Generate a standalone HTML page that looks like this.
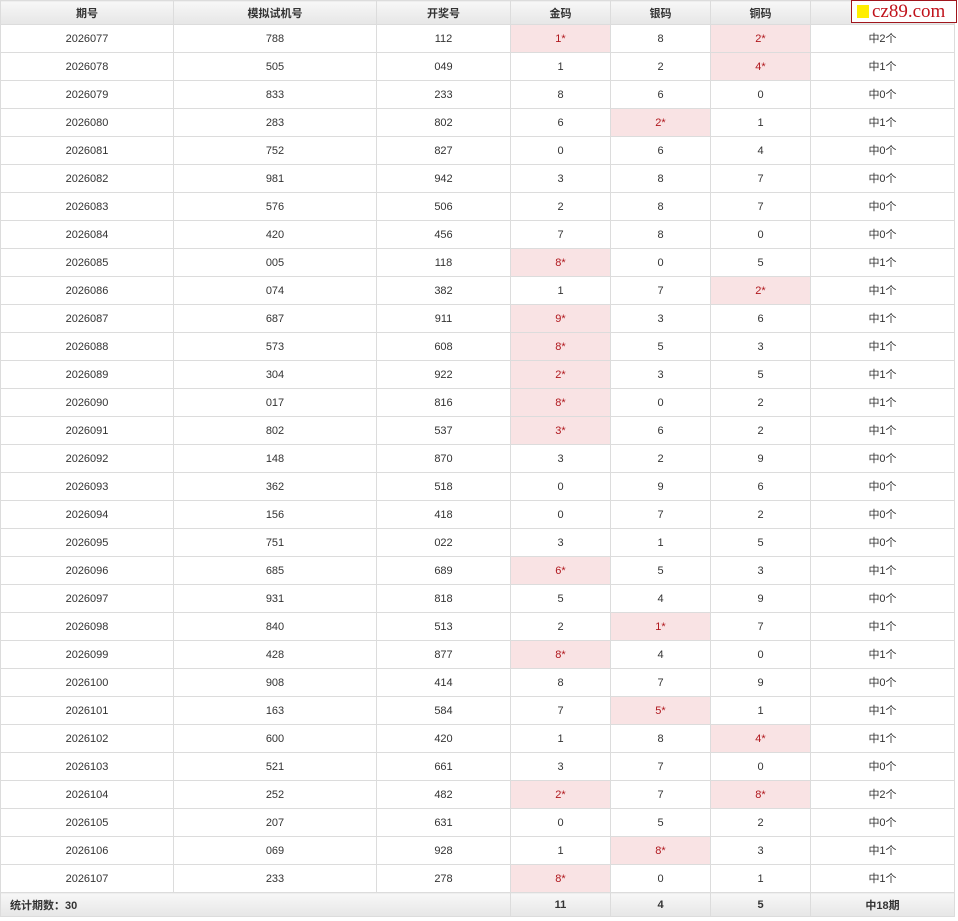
<!DOCTYPE html><html><head><meta charset="utf-8"><style>
body{margin:0;background:#fff;font-family:"Liberation Sans","Noto Sans CJK SC",sans-serif;font-size:11px;color:#333}
table{position:absolute;left:0;top:0;border-collapse:collapse;table-layout:fixed;width:954px}
td,th{border:1px solid #dcdcdc;text-align:center;padding:0;height:27px}
td span{position:relative;top:-1px}
th{height:23px;background:linear-gradient(#f7f7f7,#e6e6e6);font-weight:bold;color:#333}
td.h{background:#f9e3e4;color:#b0181e}
tr.f td{height:23px;background:linear-gradient(#f7f7f7,#e6e6e6);font-weight:bold}
.logo{position:absolute;left:851px;top:0;width:104px;height:21px;border:1px solid #a0151c;background:#fff;color:#c0121b;font-family:"Liberation Serif",serif;font-size:19px;line-height:21px}
.logo i{display:inline-block;width:12px;height:13px;background:#ffee00;margin:0 3px 0 5px;vertical-align:-1px}
</style></head><body>
<table>
<colgroup><col style="width:173px"><col style="width:203px"><col style="width:134px"><col style="width:100px"><col style="width:100px"><col style="width:100px"><col style="width:144px"></colgroup>
<tr><th>期号</th><th>模拟试机号</th><th>开奖号</th><th>金码</th><th>银码</th><th>铜码</th><th>中奖</th></tr>
<tr><td>2026077</td><td>788</td><td>112</td><td class="h">1*</td><td>8</td><td class="h">2*</td><td><span>中2个</span></td></tr>
<tr><td>2026078</td><td>505</td><td>049</td><td>1</td><td>2</td><td class="h">4*</td><td><span>中1个</span></td></tr>
<tr><td>2026079</td><td>833</td><td>233</td><td>8</td><td>6</td><td>0</td><td><span>中0个</span></td></tr>
<tr><td>2026080</td><td>283</td><td>802</td><td>6</td><td class="h">2*</td><td>1</td><td><span>中1个</span></td></tr>
<tr><td>2026081</td><td>752</td><td>827</td><td>0</td><td>6</td><td>4</td><td><span>中0个</span></td></tr>
<tr><td>2026082</td><td>981</td><td>942</td><td>3</td><td>8</td><td>7</td><td><span>中0个</span></td></tr>
<tr><td>2026083</td><td>576</td><td>506</td><td>2</td><td>8</td><td>7</td><td><span>中0个</span></td></tr>
<tr><td>2026084</td><td>420</td><td>456</td><td>7</td><td>8</td><td>0</td><td><span>中0个</span></td></tr>
<tr><td>2026085</td><td>005</td><td>118</td><td class="h">8*</td><td>0</td><td>5</td><td><span>中1个</span></td></tr>
<tr><td>2026086</td><td>074</td><td>382</td><td>1</td><td>7</td><td class="h">2*</td><td><span>中1个</span></td></tr>
<tr><td>2026087</td><td>687</td><td>911</td><td class="h">9*</td><td>3</td><td>6</td><td><span>中1个</span></td></tr>
<tr><td>2026088</td><td>573</td><td>608</td><td class="h">8*</td><td>5</td><td>3</td><td><span>中1个</span></td></tr>
<tr><td>2026089</td><td>304</td><td>922</td><td class="h">2*</td><td>3</td><td>5</td><td><span>中1个</span></td></tr>
<tr><td>2026090</td><td>017</td><td>816</td><td class="h">8*</td><td>0</td><td>2</td><td><span>中1个</span></td></tr>
<tr><td>2026091</td><td>802</td><td>537</td><td class="h">3*</td><td>6</td><td>2</td><td><span>中1个</span></td></tr>
<tr><td>2026092</td><td>148</td><td>870</td><td>3</td><td>2</td><td>9</td><td><span>中0个</span></td></tr>
<tr><td>2026093</td><td>362</td><td>518</td><td>0</td><td>9</td><td>6</td><td><span>中0个</span></td></tr>
<tr><td>2026094</td><td>156</td><td>418</td><td>0</td><td>7</td><td>2</td><td><span>中0个</span></td></tr>
<tr><td>2026095</td><td>751</td><td>022</td><td>3</td><td>1</td><td>5</td><td><span>中0个</span></td></tr>
<tr><td>2026096</td><td>685</td><td>689</td><td class="h">6*</td><td>5</td><td>3</td><td><span>中1个</span></td></tr>
<tr><td>2026097</td><td>931</td><td>818</td><td>5</td><td>4</td><td>9</td><td><span>中0个</span></td></tr>
<tr><td>2026098</td><td>840</td><td>513</td><td>2</td><td class="h">1*</td><td>7</td><td><span>中1个</span></td></tr>
<tr><td>2026099</td><td>428</td><td>877</td><td class="h">8*</td><td>4</td><td>0</td><td><span>中1个</span></td></tr>
<tr><td>2026100</td><td>908</td><td>414</td><td>8</td><td>7</td><td>9</td><td><span>中0个</span></td></tr>
<tr><td>2026101</td><td>163</td><td>584</td><td>7</td><td class="h">5*</td><td>1</td><td><span>中1个</span></td></tr>
<tr><td>2026102</td><td>600</td><td>420</td><td>1</td><td>8</td><td class="h">4*</td><td><span>中1个</span></td></tr>
<tr><td>2026103</td><td>521</td><td>661</td><td>3</td><td>7</td><td>0</td><td><span>中0个</span></td></tr>
<tr><td>2026104</td><td>252</td><td>482</td><td class="h">2*</td><td>7</td><td class="h">8*</td><td><span>中2个</span></td></tr>
<tr><td>2026105</td><td>207</td><td>631</td><td>0</td><td>5</td><td>2</td><td><span>中0个</span></td></tr>
<tr><td>2026106</td><td>069</td><td>928</td><td>1</td><td class="h">8*</td><td>3</td><td><span>中1个</span></td></tr>
<tr><td>2026107</td><td>233</td><td>278</td><td class="h">8*</td><td>0</td><td>1</td><td><span>中1个</span></td></tr>
<tr class="f"><td colspan="3" style="text-align:left;padding-left:9px">统计期数：30</td><td>11</td><td>4</td><td>5</td><td>中18期</td></tr>
</table>
<div class="logo"><i></i>cz89.com</div>
</body></html>
